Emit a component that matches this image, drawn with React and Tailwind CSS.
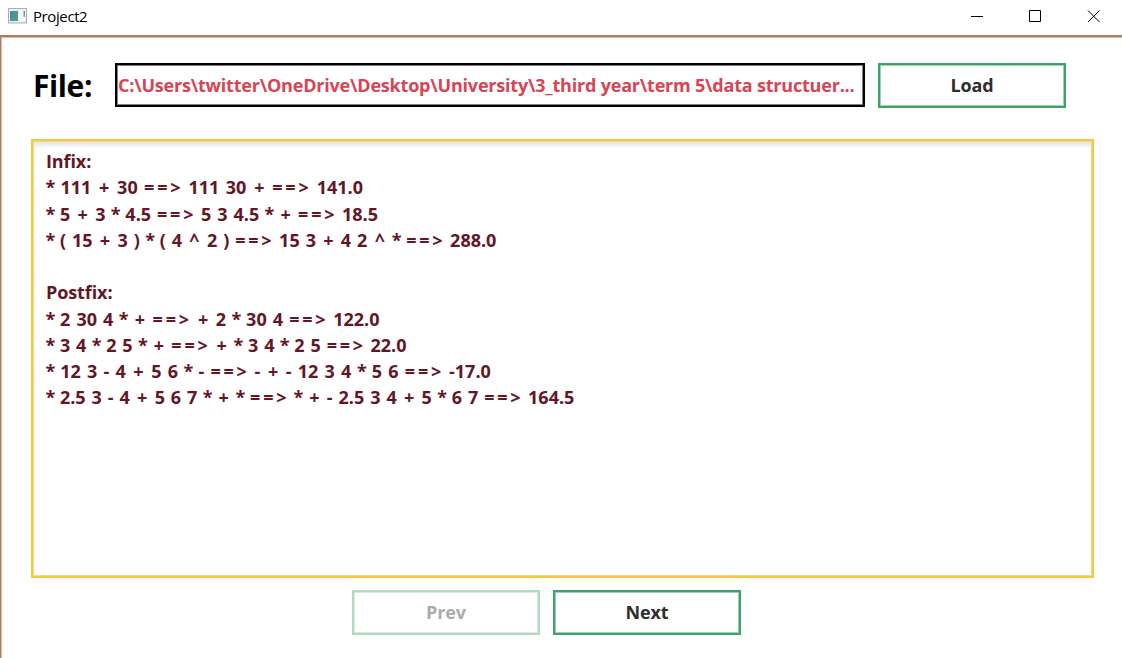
const LINES = [
  ["Infix:", 45],
  ["* 111 + 30 ==> 111 30 + ==> 141.0", 317],
  ["* 5 + 3 * 4.5 ==> 5 3 4.5 * + ==> 18.5", 332],
  ["* ( 15 + 3 ) * ( 4 ^ 2 ) ==> 15 3 + 4 2 ^ * ==> 288.0", 450.5],
  ["", 0],
  ["Postfix:", 66],
  ["* 2 30 4 * + ==> + 2 * 30 4 ==> 122.0", 333.5],
  ["* 3 4 * 2 5 * + ==> + * 3 4 * 2 5 ==> 22.0", 360.5],
  ["* 12 3 - 4 + 5 6 * - ==> - + - 12 3 4 * 5 6 ==> -17.0", 445],
  ["* 2.5 3 - 4 + 5 6 7 * + * ==> * + - 2.5 3 4 + 5 * 6 7 ==> 164.5", 528.5],
];

const OPERATORS = {
  "*": "inline-block w-[8px] indent-[-0.6px] [text-align-last:left]",
  "+": "inline-block w-[13px] [text-align-last:center]",
  "^": "inline-block w-[13px] [text-align-last:center]",
  "==>": "inline-block w-[38px] tracking-[2.8px] [text-align-last:left]",
};

function Line({ text, width }) {
  const justified = text.includes(" ");
  return (
    <div
      className={
        justified
          ? "h-[26.25px] whitespace-nowrap [text-align-last:justify]"
          : "h-[26.25px] whitespace-nowrap tracking-[-0.1px]"
      }
      style={{ width }}
    >
      {text.split(" ").map((t, i) => (
        <span key={i}>
          {i > 0 && " "}
          <span className={OPERATORS[t]}>{t}</span>
        </span>
      ))}
    </div>
  );
}

function Button({ children, disabled }) {
  return (
    <button
      disabled={disabled}
      className="flex h-[45px] w-[188px] items-center justify-center border-2 border-[#3da268] pb-px text-[18px] font-bold tracking-[-0.1px] text-[#2e2e2e] shadow-[inset_0_0_0_1px_#9ed1b4] disabled:opacity-40"
    >
      {children}
    </button>
  );
}

export default function App() {
  return (
    <div className="flex h-[658px] w-[1122px] flex-col overflow-hidden bg-white font-['Open_Sans','Noto_Sans',sans-serif]">
      <header className="flex h-[35px] shrink-0 items-center pb-[3px] pl-2">
        <svg width="19" height="16" viewBox="0 0 19 16">
          <defs>
            <linearGradient id="pane" x1="0" y1="0" x2="1" y2="1">
              <stop offset="0" stopColor="#4b7fae" />
              <stop offset="1" stopColor="#55a875" />
            </linearGradient>
            <linearGradient id="strip" x1="0" y1="0" x2="0" y2="1">
              <stop offset="0" stopColor="#4b8fae" />
              <stop offset="1" stopColor="#6fc08d" />
            </linearGradient>
          </defs>
          <rect x=".5" y=".5" width="18" height="14.500" fill="#eceff2" stroke="#a9b0b7" />
          <rect x="2" y="3" width="8" height="10" fill="url(#pane)" />
          <rect x="11" y="3" width="6" height="10" fill="#fff" />
          <rect x="15.500" y="3" width="1.500" height="6" fill="url(#strip)" />
        </svg>
        <span className="ml-[6px] pt-px text-[15px] tracking-[-0.4px] text-black">Project2</span>
        <svg className="ml-auto mr-[21px]" width="130" height="13" fill="none" stroke="#000">
          <path d="M0 6.500h12M58.500.5h11v11h-11zM117 .5l11.500 11.500m0-11.500l-11.500 11.500" />
        </svg>
      </header>
      <main className="flex grow flex-col border-l border-t-2 border-[#b47b5a] pl-[30px] pt-[26px] shadow-[inset_1px_1px_0_#d8bcab]">
        <div className="flex h-[45px] shrink-0 items-start">
          <h1 className="w-[84px] pl-[2px] text-[30px] font-bold leading-[45px] tracking-[-0.4px] text-black">File:</h1>
          <div className="h-[44px] w-[750px] border-2 border-black pl-px shadow-[inset_0_0_0_1px_#808080]">
            <p className="w-[740px] whitespace-nowrap text-[18px] font-bold leading-[40px] tracking-[-0.2px] text-[#d64554]">
              C:\Users\twitter\OneDrive\Desktop\University\3_third year\term 5\data structuer...
            </p>
          </div>
          <div className="ml-[13px]">
            <Button>Load</Button>
          </div>
        </div>
        <div className="mt-[31px] h-[439px] w-[1063px] shrink-0 border-2 border-[#f4cb36] pl-[13px] pt-[7px] text-[18px] font-bold leading-[26.25px] text-[#641526] shadow-[inset_0_0_0_1px_#eadba5,inset_0_5px_4px_-1px_#e2e2e2]">
          {LINES.map(([text, width], i) => (
            <Line key={i} text={text} width={width} />
          ))}
        </div>
        <div className="ml-[321px] mt-[12px] flex gap-[13px]">
          <Button disabled>Prev</Button>
          <Button>Next</Button>
        </div>
      </main>
    </div>
  );
}
